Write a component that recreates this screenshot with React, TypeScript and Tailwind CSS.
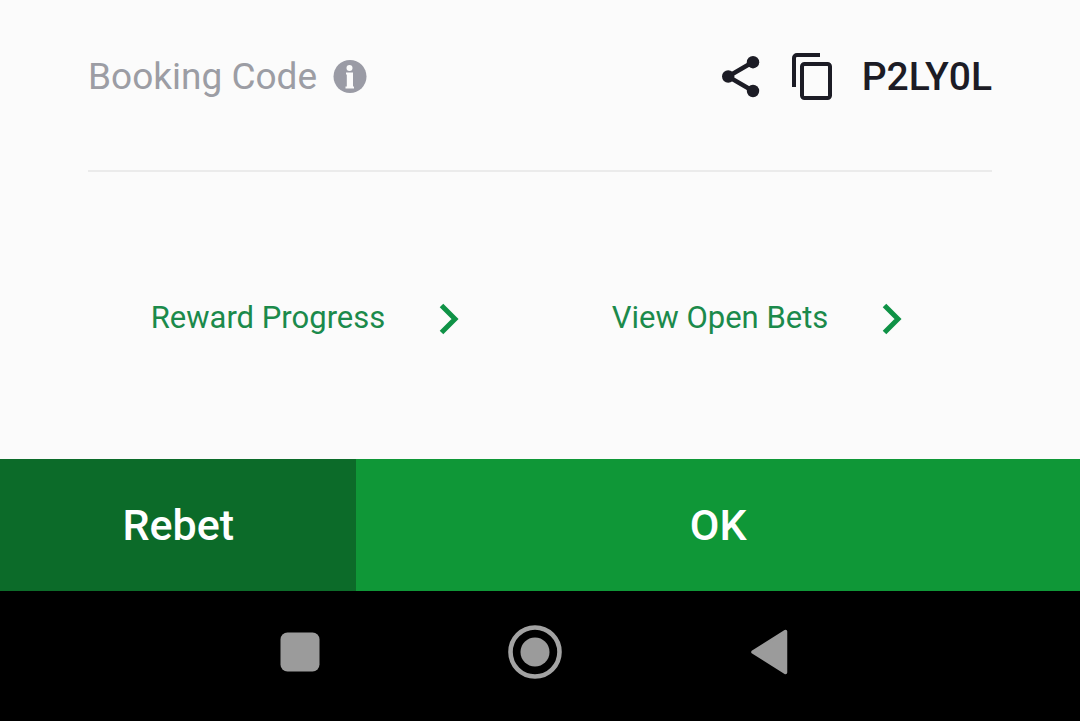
import React from "react";

function InfoIcon() {
  return (
    <svg className="h-[34px] w-[34px]" viewBox="0 0 34 34" aria-hidden="true">
      <circle cx="17" cy="16.5" r="16.5" fill="#9a9ba5" />
      <circle cx="16.5" cy="8" r="3" fill="#fbfbfb" />
      <path
        d="M13 12.500h7v14h1v2h-8.500v-2h1.300v-12h-0.800z"
        fill="#fbfbfb"
      />
    </svg>
  );
}

function ShareIcon() {
  return (
    <svg className="h-[42px] w-10" viewBox="0 0 40 42" aria-hidden="true">
      <path
        d="M31 6L6 20.5L31 35"
        fill="none"
        stroke="#1c1c25"
        strokeWidth="4.4"
      />
      <circle cx="31" cy="6.2" r="6.2" fill="#1c1c25" />
      <circle cx="6.2" cy="20.5" r="6.2" fill="#1c1c25" />
      <circle cx="31" cy="35" r="6.2" fill="#1c1c25" />
    </svg>
  );
}

function CopyIcon() {
  return (
    <svg
      className="h-12 w-10"
      viewBox="0 0 40 48"
      fill="none"
      stroke="#1c1c25"
      strokeWidth="4"
      aria-hidden="true"
    >
      <path d="M2 34V5a3 3 0 0 1 3-3h23" />
      <rect x="10" y="11" width="28" height="34" rx="2.5" />
    </svg>
  );
}

function ArrowIcon() {
  return (
    <svg className="h-14 w-14" viewBox="0 0 56 56" aria-hidden="true">
      <path
        d="M20.5 15.5L34 29L20.5 42.5"
        fill="none"
        stroke="#0f9246"
        strokeWidth="5"
      />
    </svg>
  );
}

const links = ["Reward Progress", "View Open Bets"];

export default function App() {
  return (
    <div className="flex min-h-screen flex-col bg-black font-['Roboto','Liberation_Sans',sans-serif]">
      <main className="flex-grow bg-[#fbfbfb] px-[88px]">
        <div className="flex items-center justify-between border-b-2 border-[#ebebeb] pt-[49px] pb-[65px]">
          <div className="flex h-14 items-center gap-4 text-[37px] text-[#9c9da4]">
            <span>Booking Code</span>
            <button type="button" aria-label="Booking code info">
              <InfoIcon />
            </button>
          </div>
          <div className="flex h-14 items-center gap-[30px]">
            <button type="button" aria-label="Share">
              <ShareIcon />
            </button>
            <button type="button" aria-label="Copy booking code">
              <CopyIcon />
            </button>
            <span className="text-[39px] font-medium text-[#1c1c25]">
              P2LY0L
            </span>
          </div>
        </div>
        <nav className="grid grid-cols-2 pt-[118px] pb-[113px]">
          {links.map((label) => (
            <a
              key={label}
              href="#"
              className="flex items-center justify-center gap-9 text-[31px] whitespace-nowrap text-[#1b8a4b]"
            >
              {label}
              <ArrowIcon />
            </a>
          ))}
        </nav>
      </main>

      <div className="flex h-[132px] text-[43px] font-medium text-white">
        <button type="button" className="w-[33%] bg-[#0c6b29]">
          Rebet
        </button>
        <button type="button" className="flex-grow bg-[#0f9737]">
          OK
        </button>
      </div>

      {/* system navigation */}
      <footer className="grid h-[130px] grid-cols-3 items-center justify-items-center bg-black pr-[193px] pb-2 pl-[182px]">
        <button type="button" aria-label="Recent apps">
          <svg className="h-14 w-14" viewBox="0 0 56 56" aria-hidden="true">
            <rect x="8.5" y="8.5" width="39" height="39" rx="7" fill="#9b9b9b" />
          </svg>
        </button>
        <button type="button" aria-label="Home">
          <svg className="h-14 w-14" viewBox="0 0 56 56" aria-hidden="true">
            <circle
              cx="28"
              cy="28"
              r="24.5"
              fill="none"
              stroke="#a3a3a3"
              strokeWidth="4.6"
            />
            <circle cx="28" cy="28" r="14.5" fill="#9b9b9b" />
          </svg>
        </button>
        <button type="button" aria-label="Back">
          <svg className="h-14 w-14" viewBox="0 0 56 56" aria-hidden="true">
            <path
              d="M11 28L43.5 7.5V48.5Z"
              fill="#9b9b9b"
              stroke="#9b9b9b"
              strokeWidth="3.5"
              strokeLinejoin="round"
            />
          </svg>
        </button>
      </footer>
    </div>
  );
}
